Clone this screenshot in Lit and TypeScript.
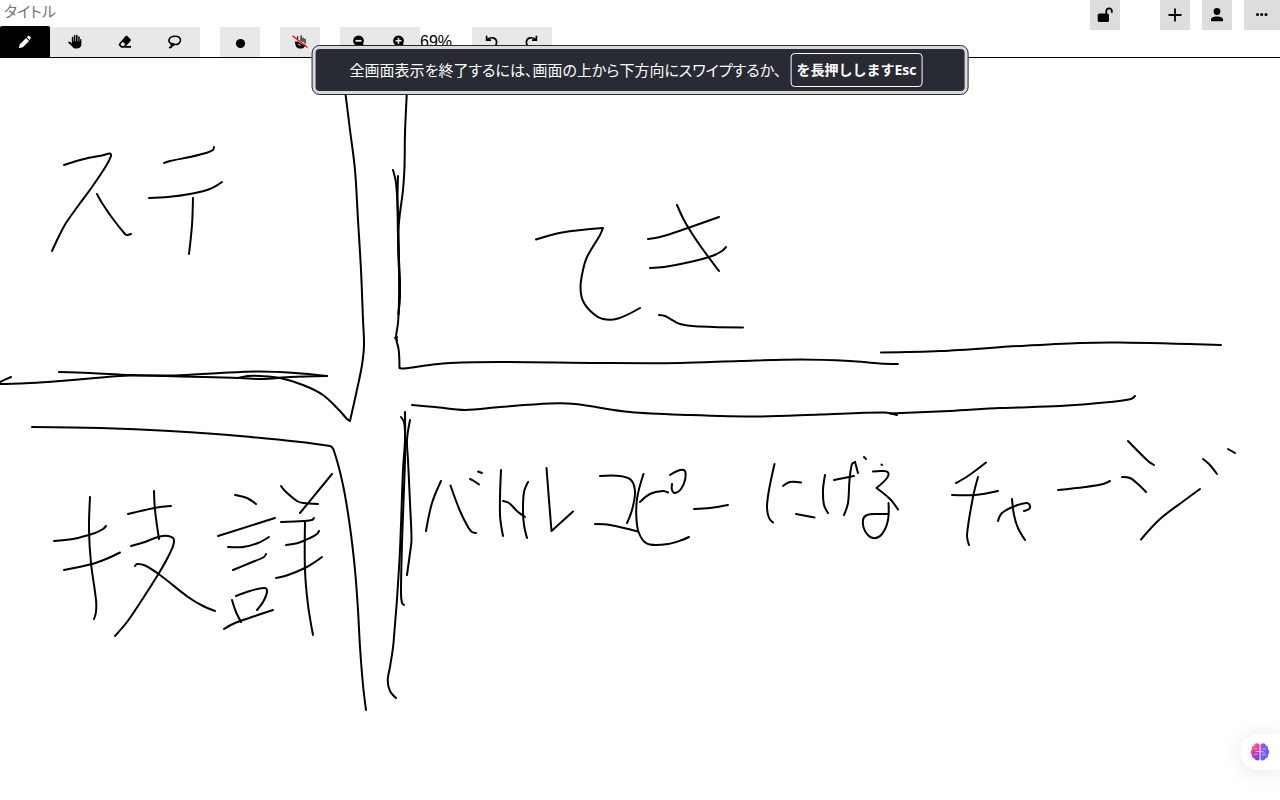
import { LitElement, html, css, svg } from "lit";
import { customElement } from "lit/decorators.js";

// Each stroke is a list of "x,y" points; a repeated point makes a sharp corner.
const STROKES: string[] = [
  // frame lines
  "345,90 350,130 355,170 358,220 361,270 363,320 364,345 362,365 358,385 350,421 350,421 347,419 340,411 323,395 303,385 280,378 260,376 248,376 238,378",
  "11,377 0,382 -2,383 0,384 30,383 60,381 95,378 130,375.500 175,375.500 220,373 260,371.5 295,373 327,376",
  "59,372 90,373 130,375 180,376.5 240,378 262,379 290,377 327,376",
  "32,427 100,428 170,431 240,436 330,446 334,451 343,485 350,527 355,570 358,610 360,647 363,685 366,710",
  "407,90 405,133 404.5,167 403,190 400,213 398,235 399,260 400,290 398.5,314",
  "393,170 396,183 398,215 399,260 399,300 398,323 396,337 397,340",
  "398,176 397.5,200 398.5,260 400,290 398.5,314",
  "395,338 397,337 396,338 398.7,350 399.5,368 399.5,368 404,368.5 430,365 450,363 500,362 600,363 680,363 740,361 800,359.5 850,361 880,363.5 898,364",
  "881,352.5 940,351 1020,346 1080,343 1120,342.5 1221,345",
  "412,405 435,407 465,410 500,407 550,403.5 575,404 630,412 690,415 760,416.5 820,414.5 885,412.5 897,415",
  "890,413.5 950,411 1000,408 1060,406 1110,402 1131,399 1135,396",
  "405,412 405,440 403,470 399.5,560 393.5,643 390,667 387.7,680 390,691 396,698",
  "401,417 404,422 405,432 405,460 402,543 401,593 402,603 404,605",
  "410,420 407,440 408,460 410,503 411.5,540 410,553 407,575",
  // upper left
  "64,165 84,159 104,155 110,153.5 111,156 106,166 92,187 78,206 66,223 60,234 52,251",
  "97,194 102,203 113,219 125,234 127,235 131,234",
  "164,163 170,161 190,157 206,153 213,150 214,147",
  "149,198 168,197 190,194 210,189 222,182",
  "193,198 192,225 189,254",
  // upper right
  "536,239.5 562,232.5 603,228 603,228 600,235 587,257 583,270 580.5,287 583,301 592,312.5 603,319 618,318.5 640,308",
  "648,239 660,237 682,230 719,217",
  "650,268 664,267 690,262 712,256 722,251 726,247",
  "677,205 685,222 699,244 719,271",
  "659,315 665,316 680,324 700,326.5 743,327.5",
  // lower left
  "90,497 89,530 91,563 96,600 96,612 94,619",
  "54,541 73,539 95,533 103,529 106,526",
  "64,570 92,564 106,559 120,552.5",
  "128,514 145,510 160,507 171,506",
  "154,491 155,510 159,539",
  "131,546 145,542 158,537 168,536 174,540 170,553 159,573 138,606 127,622 115,636",
  "135,566 137,564 145,565.5 160,575 188,597 203,606 215,611",
  "235,495 247,498 256,504",
  "218,536 275,518",
  "228,547 243,547 258,543 269,537",
  "233,570 250,563 264,557 266,554",
  "232,600 236,612 241,622",
  "236,596 250,591 265,588 267,592 263,602 257,610",
  "224,629 235,623 255,616 273,610",
  "281,486 285,491 297,501 303,503 318,504",
  "332,474 300,513",
  "281,522 304,521 312,520 314,518",
  "286,545 298,543 310,538 317,534 319,531",
  "276,578 288,575 305,568 315,562 322,557",
  "305,522 305,570 308,605 313,635",
  // lower right
  "441,481 432,503 426,531",
  "450.5,485.5 460,511 468,527 472,532 476,533",
  "470,479 474,481 479,484.5",
  "478,471.5 482,473",
  "501,470 500,515 503,536",
  "503,501 509,503 517,511 525,517",
  "528,482 524,492 523,510 524,525 527,538",
  "546.5,468 549,500 551.5,531 551.5,531 573,511.5",
  "600,476 620,476 631,480 635,492 632,510 627,523",
  "595,524 610,525 638,531.5",
  "643.5,474 637,499 637,525 642,539 650,544.5 668,544 682,540 689,537",
  "640,502 650,494 663,491 668,492.5",
  "670,475 680,470 685,471 685,480 681,489 675,493 672,490 672,484",
  "694,509 710,508 728,505",
  "774.5,464 769,490 767,507 769,518 773,522.5",
  "783,486 790,482 801,482.5",
  "796,514 814.5,517.5",
  "825,475 823,490 824,505 828,513",
  "834,480 854,476",
  "855,462 852,464 849.5,480 848,503 844,515",
  "855,462 858,473",
  "864,457 866,459",
  "881.5,464.5 882,465",
  "873,471.5 882,471 888,472.5 887,478 876.5,488 876.5,488 890,499 898,509.5",
  "888.5,503 888,520 882,534 873,538 865,531 863,520 867,515 877,514 888,514",
  "956,483 968,476 986,462.5",
  "952,495 975,495 998,491",
  "978,477 973,497 967,535 969,545",
  "998,521 1002,513 1015,506 1027,503 1030,506 1029,509 1024,511",
  "1012,499 1014,515 1018,528 1025,540",
  "1058,490 1085,487 1103,484 1110,481",
  "1128,441 1148,461 1154,465",
  "1122,477 1130,478 1138,484 1146,492",
  "1200,489 1185,500 1160,519 1141,539.5",
  "1203,459 1209,464 1217,474",
  "1228,449 1235,453",
];

// Smooths a point list into cubic curves that pass through every point.
function smooth(list: string): string {
  const p = list.split(" ").map((s) => s.split(",").map(Number));
  const corner = (i: number) =>
    (i > 0 && p[i][0] === p[i - 1][0] && p[i][1] === p[i - 1][1]) ||
    (i < p.length - 1 && p[i][0] === p[i + 1][0] && p[i][1] === p[i + 1][1]);
  const len = (a: number[], b: number[]) => Math.hypot(a[0] - b[0], a[1] - b[1]);
  const tangent = (i: number) => {
    if (i === 0 || i === p.length - 1 || corner(i)) return [0, 0];
    const dx = p[i + 1][0] - p[i - 1][0];
    const dy = p[i + 1][1] - p[i - 1][1];
    const l = Math.hypot(dx, dy) || 1;
    return [dx / l, dy / l];
  };
  let d = `M${p[0][0]} ${p[0][1]}`;
  for (let i = 0; i < p.length - 1; i++) {
    const a = p[i];
    const b = p[i + 1];
    const k = len(a, b) / 3;
    if (k === 0) continue;
    const t = tangent(i);
    const u = tangent(i + 1);
    d += `C${a[0] + t[0] * k} ${a[1] + t[1] * k} ${b[0] - u[0] * k} ${b[1] - u[1] * k} ${b[0]} ${b[1]}`;
  }
  return d;
}

const icons = {
  pencil: svg`<path d="M1.800 14.200l1-4 6.300-6.300 3 3-6.300 6.300zM9.700 3.300l.9-.9c.9-.9 1.900-.6 2.500 0 .8.8 1 1.700.1 2.600l-.6.9z"/>`,
  hand: svg`<path d="M1.400 7.800c.6-.7 1.300-.4 1.800.1l1.600 1.500V3.500a.7.7 0 0 1 1.400 0v3.700h.6V1.900a.8.8 0 0 1 1.600 0v5.300H9V1.600a.8.8 0 0 1 1.600 0v5.600h.6V3a.75.75 0 0 1 1.500 0v4.700h.4V5.600a.65.65 0 0 1 1.300 0V10c0 3-2 4.500-4.900 4.500-2.300 0-3.500-.8-4.500-2.300L1.500 9c-.3-.4-.4-.8-.1-1.200z"/>`,
  eraser: svg`<path fill-rule="evenodd" d="M8.600 2.100c.5-.5 1.200-.5 1.700 0l3.200 3.200c.5.5.5 1.200 0 1.700L9 12h5v1.700H4.200L2 11.400c-.5-.5-.5-1.200 0-1.700zM5.600 7.700L3.400 10.400l1.700 1.700h1.500l1.900-1.800z"/>`,
  lasso: svg`<path fill="none" stroke="currentColor" stroke-width="1.600" d="M4.300 9.600C.4 7.700 1.300 2.200 8 2.200c3.500 0 5.500 1.500 5.500 3.900 0 3-2.700 4.600-5.500 4.400-1.300 0-1.900-1.100-3-.9-1.400.3-1.200 2.100.2 2.100 1.100 0 1.500-.6 1.300-1.700M4.900 11.600c-.1 1.200-1 1.900-2.900 2"/>`,
  dot: svg`<circle cx="8.500" cy="9.500" r="4.600"/>`,
  noHand: svg`<path d="M5 4.500l1.200 1v-3a.7.7 0 0 0-1.200 0zM8.500 1.800a.6.6 0 0 1 1.200 0v5.400H8.500zM10.400 4a.6.6 0 0 1 1.200 0v4h-1.200zM12.400 5a.6.6 0 0 1 1.200 0v5l-1.200-1z"/><path fill-rule="evenodd" d="M2.800 7.500h3l5 3.200h2.500c-.5 2.600-2 3.900-4.700 3.900-2.500 0-4-1-5-3.200zM5.500 9.200L7 11.500l2.300-.2z"/><path fill="none" stroke="red" stroke-width="1.300" d="M.5 1.800L15.500 13.500"/>`,
  minus: svg`<circle cx="6.500" cy="6.800" r="5.400"/><path fill="none" stroke="currentColor" stroke-width="2.200" d="M9.500 10l4 4"/><path stroke="#e8e8e8" stroke-width="1.800" d="M3.500 6.800h6"/>`,
  plusZoom: svg`<circle cx="6.500" cy="6.800" r="5.400"/><path fill="none" stroke="currentColor" stroke-width="2.200" d="M9.500 10l4 4"/><path stroke="#e8e8e8" stroke-width="1.600" d="M3.500 6.800h6M6.500 3.800v6"/>`,
  undo: svg`<path fill="none" stroke="currentColor" stroke-width="1.700" d="M2.600 1.800v4.400H7M3 6C5.500 2.500 12.600 3 12.600 8.300c0 3-2.200 4.700-5 4.700H6.500"/>`,
  redo: svg`<path fill="none" stroke="currentColor" stroke-width="1.700" d="M12.400 1.800v4.400H8M12 6C9.500 2.500 2.400 3 2.400 8.300c0 3 2.200 4.700 5 4.700h1.100"/>`,
  unlock: svg`<rect x=".7" y="6.600" width="11.300" height="8.400" rx="1.600"/><path fill="none" stroke="currentColor" stroke-width="1.800" d="M9.300 7V4.100c0-3.700 5.500-3.700 5.500 0v1.700"/>`,
  plus: svg`<path stroke="currentColor" stroke-width="1.800" d="M1.500 8h13M8 1.500v13"/>`,
  user: svg`<circle cx="8" cy="4.500" r="3.400"/><path d="M2 14.200v-1.500C2 10.300 4.500 9.400 8 9.400s6 .9 6 3.300v1.500z"/>`,
  more: svg`<circle cx="3.500" cy="7.500" r="1.500"/><circle cx="7.700" cy="7.500" r="1.500"/><circle cx="12" cy="7.500" r="1.500"/>`,
};

type IconName = keyof typeof icons;

@customElement("app-root")
export class AppRoot extends LitElement {
  static styles = css`
    :host {
      display: flex;
      flex-direction: column;
      height: 100vh;
      overflow: hidden;
      background: #fff;
      color: #000;
      font-family: "Liberation Sans", "Noto Sans CJK JP", sans-serif;
      font-size: 16px;
    }
    header {
      display: flex;
      justify-content: space-between;
      align-items: flex-start;
      border-bottom: 1px solid #000;
    }
    .title {
      display: block;
      box-sizing: border-box;
      width: 300px;
      height: 27px;
      padding: 0 4px 7px;
      border: 0;
      outline: 0;
      background: none;
      font: 15px/20px "Noto Sans CJK JP", sans-serif;
      font-feature-settings: "palt";
    }
    .title::placeholder {
      color: #757575;
    }
    .tools,
    .actions,
    .group {
      display: flex;
    }
    .tools {
      gap: 20px;
    }
    .tool,
    .action {
      display: grid;
      place-items: center;
      padding: 0;
      border: 0;
      color: #000;
      width: 40px;
      height: 30px;
      background: #e8e8e8;
    }
    .wide .tool {
      width: 50px;
    }
    .wide .tool.on {
      background: #000;
      color: #fff;
      border-radius: 2px;
      box-shadow: 0 -1px #000, 0 1px #000;
    }
    .action {
      width: 30px;
      background: #ddd;
    }
    .actions {
      gap: 12px;
    }
    .lock {
      margin-right: 28px;
    }
    .more {
      width: 36px;
    }
    .icon {
      display: block;
      width: 16px;
      height: 16px;
      fill: currentColor;
    }
    .zoom {
      line-height: 30px;
    }
    main {
      flex: 1;
      min-height: 0;
    }
    .canvas {
      display: block;
      width: 100%;
      height: 100%;
    }
    .ink {
      fill: none;
      stroke: #000;
      stroke-width: 2;
      stroke-linecap: round;
      stroke-linejoin: round;
    }
    .notice {
      position: absolute;
      top: 45px;
      left: 50%;
      transform: translateX(-50%);
      display: flex;
      align-items: center;
      gap: 9px;
      box-sizing: border-box;
      height: 50px;
      padding: 0 42px 0 34px;
      border: 4px solid #d9d9da;
      outline: 1px solid #282b33;
      outline-offset: -1px;
      border-radius: 8px;
      background: #282b33;
      color: #fff;
      white-space: nowrap;
      font: 15px/22px "Noto Sans CJK JP", sans-serif;
      font-feature-settings: "palt";
    }
    .notice kbd {
      box-sizing: border-box;
      height: 34px;
      padding: 5px;
      border: 1px solid #fff;
      border-radius: 4px;
      font: bold 14px/22px "Open Sans", "Noto Sans CJK JP", sans-serif;
    }
    .assistant {
      position: absolute;
      right: 0;
      bottom: 30px;
      width: 40px;
      height: 36px;
      padding: 0 0 0 10px;
      border: 0;
      border-radius: 18px 0 0 18px;
      background: #fff;
      box-shadow: 0 2px 20px rgba(0, 0, 0, 0.1);
    }
    .brain {
      display: block;
      width: 20px;
      height: 20px;
    }
  `;

  private icon(name: IconName) {
    return html`<svg class="icon" viewBox="0 0 16 16" aria-hidden="true">${icons[name]}</svg>`;
  }

  private tool(name: IconName, label: string, on = false) {
    return html`<button class="tool ${on ? "on" : ""}" aria-label=${label}>${this.icon(name)}</button>`;
  }

  render() {
    return html`
      <header>
        <div>
          <input class="title" placeholder="タイトル" aria-label="タイトル" />
          <div class="tools">
            <div class="group wide">
              ${this.tool("pencil", "ペン", true)} ${this.tool("hand", "移動")}
              ${this.tool("eraser", "消しゴム")} ${this.tool("lasso", "選択")}
            </div>
            ${this.tool("dot", "太さ")} ${this.tool("noHand", "タッチ無効")}
            <div class="group">
              ${this.tool("minus", "縮小")} ${this.tool("plusZoom", "拡大")}
              <span class="zoom">69%</span>
            </div>
            <div class="group">${this.tool("undo", "元に戻す")} ${this.tool("redo", "やり直す")}</div>
          </div>
        </div>
        <div class="actions">
          <button class="action lock" aria-label="ロック">${this.icon("unlock")}</button>
          <button class="action" aria-label="新規">${this.icon("plus")}</button>
          <button class="action" aria-label="ユーザー">${this.icon("user")}</button>
          <button class="action more" aria-label="メニュー">${this.icon("more")}</button>
        </div>
      </header>
      <main>
        <svg class="canvas" role="img" aria-label="手書きキャンバス">
          <g transform="translate(0 -58)">
            ${STROKES.map((s) => svg`<path class="ink" d=${smooth(s)} />`)}
          </g>
        </svg>
      </main>
      <div class="notice" role="status">
        <span>全画面表示を終了するには、画面の上から下方向にスワイプするか、</span>
        <kbd>を長押ししますEsc</kbd>
      </div>
      <button class="assistant" aria-label="アシスタント">
        <svg class="brain" viewBox="0 0 20 20" aria-hidden="true">
          <defs>
            <linearGradient id="left" x1="0" y1="0" x2=".5" y2="1">
              <stop offset="0" stop-color="#ff9a3c" />
              <stop offset=".5" stop-color="#f0379b" />
              <stop offset="1" stop-color="#7a3df0" />
            </linearGradient>
            <linearGradient id="right" x1="0" y1="0" x2="1" y2="1">
              <stop offset="0" stop-color="#b04be8" />
              <stop offset="1" stop-color="#3f6cf5" />
            </linearGradient>
          </defs>
          <path fill="url(#left)" d="M9.500 2.500C7.800.5 4.600 1 4.200 3.300 2 4 1.500 5.800 2.100 7.200.3 8.500.3 11.500 2 12.700c-.3 2 .8 3.400 2.500 3.900.8 2.200 3.900 2.600 5 .8z" />
          <path fill="url(#right)" d="M10.500 2.500C12.200.5 15.400 1 15.800 3.300c2.200.7 2.700 2.500 2.100 3.900 1.800 1.300 1.800 4.300.1 5.500.3 2-.8 3.400-2.500 3.900-.8 2.200-3.900 2.600-5 .8z" />
          <path fill="none" stroke="#fff" stroke-opacity=".7" stroke-width=".9" d="M4.500 6.500c1 1 2.300.8 3-.3M9.300 9.500H5.500M4.300 13c1-1.300 2.500-1.300 3.300-.3M15.500 6.500c-1 1-2.300.8-3-.3M10.700 9.500h2l2 1.500M15.700 13.500c-1-1.300-2.500-1.300-3.300-.3" />
        </svg>
      </button>
    `;
  }
}
